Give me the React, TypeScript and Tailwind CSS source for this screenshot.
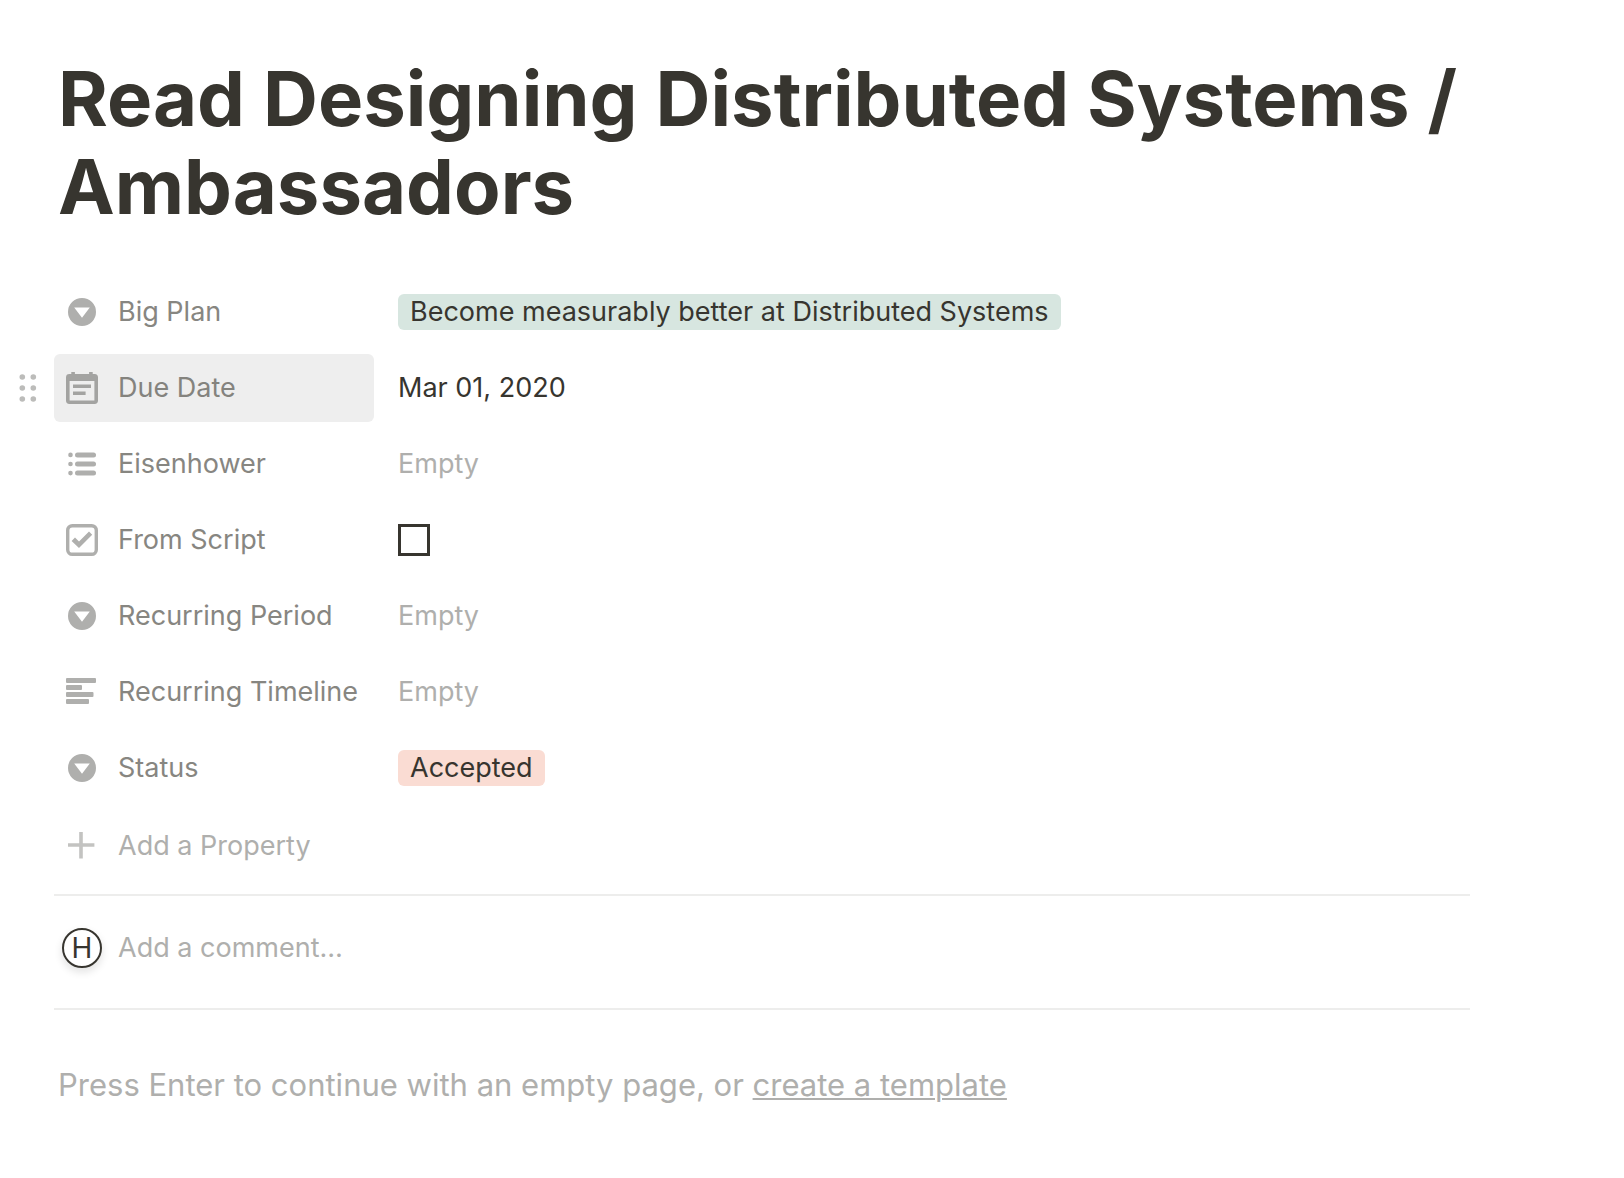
import type { ReactNode } from "react";

function SelectIcon() {
  return (
    <svg width="32" height="32" viewBox="0 0 32 32" fill="currentColor" aria-hidden="true">
      <path fillRule="evenodd" d="M16 2a14 14 0 1 1 0 28a14 14 0 0 1 0-28ZM8.2 11.4L16 21.8L23.8 11.4Z" />
    </svg>
  );
}

function DateIcon() {
  return (
    <svg width="32" height="32" viewBox="0 0 32 32" fill="currentColor" aria-hidden="true">
      <path
        fillRule="evenodd"
        d="M5.3 0h3.6v2h14.2V0h3.6v2h2A3.4 3.4 0 0 1 32 5.4v23.2a3.4 3.4 0 0 1-3.4 3.4H3.4A3.4 3.4 0 0 1 0 28.6V5.4A3.4 3.4 0 0 1 3.4 2h1.9ZM3.6 8.9v19.5h24.8V8.9Z"
      />
      <path d="M7 12.6h18v3.4H7zM7 19.6h12.6V23H7z" />
    </svg>
  );
}

function ListIcon() {
  return (
    <svg width="32" height="32" viewBox="0 0 32 32" fill="currentColor" aria-hidden="true">
      <circle cx="4.5" cy="6.9" r="2.3" />
      <circle cx="4.5" cy="16" r="2.3" />
      <circle cx="4.5" cy="25.1" r="2.3" />
      <rect x="9" y="4.4" width="21" height="5" rx="2.5" />
      <rect x="9" y="13.5" width="21" height="5" rx="2.5" />
      <rect x="9" y="22.6" width="21" height="5" rx="2.5" />
    </svg>
  );
}

function CheckIcon() {
  return (
    <svg width="32" height="32" viewBox="0 0 32 32" aria-hidden="true">
      <rect x="1.7" y="1.7" width="28.6" height="28.6" rx="4.6" fill="none" stroke="currentColor" strokeWidth="3.4" />
      <path d="M5.6 17L9 13.6L13 17.6L23 7.6L26.2 10.8L13 24Z" fill="currentColor" />
    </svg>
  );
}

function TextIcon() {
  return (
    <svg width="32" height="32" viewBox="0 0 32 32" fill="currentColor" aria-hidden="true">
      <rect x="0" y="2" width="30" height="5" rx="1" />
      <rect x="0" y="9" width="16" height="5" rx="1" />
      <rect x="0" y="16" width="27.5" height="5" rx="1" />
      <rect x="0" y="23" width="23" height="5" rx="1" />
    </svg>
  );
}

function PlusIcon() {
  return (
    <svg width="32" height="32" viewBox="0 0 32 32" fill="currentColor" aria-hidden="true">
      <path d="M13.2 2h3.6v11.2H28.4v3.6H16.8V28.4h-3.6V16.8H2v-3.6h11.2Z" />
    </svg>
  );
}

function DragHandle() {
  return (
    <button type="button" aria-label="Reorder property" className="text-[#bcbcba]">
      <svg width="18" height="28" viewBox="0 0 18 28" fill="currentColor" aria-hidden="true">
        {[3, 14].map((x) => [3, 14, 25].map((y) => <circle key={`${x}-${y}`} cx={x + 0.3} cy={y} r="2.8" />))}
      </svg>
    </button>
  );
}

function Tag({ className, children }: { className: string; children: ReactNode }) {
  return <span className={`rounded-md px-3 leading-9 text-[#37352f] ${className}`}>{children}</span>;
}

function Empty() {
  return <span className="text-[#afafad]">Empty</span>;
}

type Property = { name: string; icon: ReactNode; value: ReactNode; active?: boolean };

const properties: Property[] = [
  {
    name: "Big Plan",
    icon: <SelectIcon />,
    value: <Tag className="bg-[#d7e6e0]">Become measurably better at Distributed Systems</Tag>,
  },
  { name: "Due Date", icon: <DateIcon />, value: "Mar 01, 2020", active: true },
  { name: "Eisenhower", icon: <ListIcon />, value: <Empty /> },
  {
    name: "From Script",
    icon: <CheckIcon />,
    value: (
      <input
        type="checkbox"
        aria-label="From Script"
        className="size-8 appearance-none border-3 border-[#37352f] checked:bg-[#37352f]"
      />
    ),
  },
  { name: "Recurring Period", icon: <SelectIcon />, value: <Empty /> },
  { name: "Recurring Timeline", icon: <TextIcon />, value: <Empty /> },
  { name: "Status", icon: <SelectIcon />, value: <Tag className="bg-[#fadcd3]">Accepted</Tag> },
];

function PropertyRow({ name, icon, value, active }: Property) {
  return (
    <div className="flex items-center">
      <div className="flex w-[54px] shrink-0 pl-[19px]">{active && <DragHandle />}</div>
      <button
        type="button"
        className={`flex h-[68px] w-80 shrink-0 items-center gap-5 rounded-md pl-3 text-left whitespace-nowrap ${
          active ? "bg-[#eeeeee] text-[#84837e]" : "text-[#878681]"
        }`}
      >
        <span className={active ? "text-[#a3a3a1]" : "text-[#afafad]"}>{icon}</span>
        {name}
      </button>
      <div className="flex flex-1 items-center pl-6">{value}</div>
    </div>
  );
}

export default function App() {
  return (
    <main className="min-h-screen bg-white pt-[54px] pr-[154px] pb-12 font-['Inter',sans-serif] text-[27px] text-[#37352f]">
      <h1 className="pl-[58px] text-[76px] leading-[88px] font-bold">
        Read Designing Distributed Systems / Ambassadors
      </h1>

      <section aria-label="Properties" className="mt-12 flex flex-col gap-2">
        {properties.map((p) => (
          <PropertyRow key={p.name} {...p} />
        ))}
      </section>

      <div className="pl-[54px]">
        <button type="button" className="mt-2.5 mb-3.5 flex h-[68px] items-center gap-5 pl-3 text-[#afafad]">
          <span className="text-[#c3c3c1]">
            <PlusIcon />
          </span>
          Add a Property
        </button>

        <div className="flex h-[116px] items-center gap-4 border-y-2 border-[#ededec] pb-2 pl-2">
          <span className="flex size-10 shrink-0 items-center justify-center rounded-full border-2 border-[#37352f] text-[28px] leading-none shadow-[0_4px_8px_rgba(15,15,15,0.12)]">
            H
          </span>
          <input
            type="text"
            aria-label="Add a comment"
            placeholder="Add a comment…"
            className="min-w-0 flex-1 outline-none placeholder:text-[#afafad]"
          />
        </div>
      </div>

      <p className="mt-12 pl-[58px] text-[31px] leading-[54px] text-[#afafad]">
        Press Enter to continue with an empty page, or{" "}
        <a href="#templates" className="underline decoration-2 underline-offset-2">
          create a template
        </a>
      </p>
    </main>
  );
}
